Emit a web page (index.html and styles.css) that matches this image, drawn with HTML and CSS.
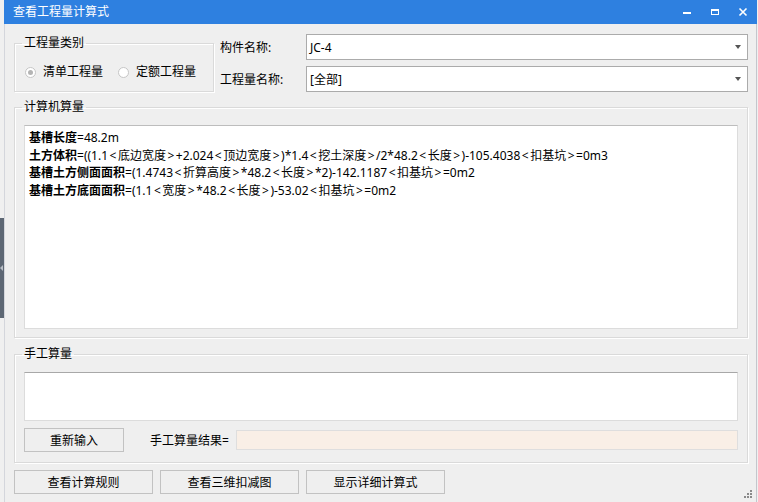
FILE: index.html
```html
<!DOCTYPE html>
<html>
<head>
  <title>查看工程量计算式</title>
  <link rel="stylesheet" href="styles.css">
</head>
<body>
  <div class="side-tab"><span class="side-arrow"></span></div>
  <div class="window">
    <div class="titlebar">
      <span class="title">查看工程量计算式</span>
      <div class="controls">
        <svg width="28" height="24" viewBox="0 0 28 24"><rect x="10" y="12" width="8" height="2" fill="#fff"/></svg>
        <svg width="28" height="24" viewBox="0 0 28 24"><rect x="10.5" y="9.5" width="7" height="5" fill="none" stroke="#fff"/><rect x="10" y="9" width="8" height="2" fill="#fff"/></svg>
        <svg width="28" height="24" viewBox="0 0 28 24"><path d="M10.5 8.5 L17.5 15.5 M17.5 8.5 L10.5 15.5" stroke="#fff" stroke-width="1.6"/></svg>
      </div>
    </div>

    <div class="content">
      <div class="top-row">
        <fieldset class="group group-type">
          <legend>工程量类别</legend>
          <div class="radio-row">
            <label class="radio"><span class="dot checked"></span>清单工程量</label>
            <label class="radio"><span class="dot"></span>定额工程量</label>
          </div>
        </fieldset>
        <div class="fields">
          <div class="field-row">
            <span class="field-label">构件名称:</span>
            <div class="combo"><span>JC-4</span><span class="arrow"></span></div>
          </div>
          <div class="field-row">
            <span class="field-label">工程量名称:</span>
            <div class="combo"><span>[全部]</span><span class="arrow"></span></div>
          </div>
        </div>
      </div>

      <fieldset class="group group-auto">
        <legend>计算机算量</legend>
        <div class="formula-box">
          <div class="line"><b>基槽长度</b>=48.2m</div>
          <div class="line"><b>土方体积</b>=((1.1<span class="ang">&lt;</span>底边宽度<span class="ang">&gt;</span>+2.024<span class="ang">&lt;</span>顶边宽度<span class="ang">&gt;</span>)*1.4<span class="ang">&lt;</span>挖土深度<span class="ang">&gt;</span>/2*48.2<span class="ang">&lt;</span>长度<span class="ang">&gt;</span>)-105.4038<span class="ang">&lt;</span>扣基坑<span class="ang">&gt;</span>=0m3</div>
          <div class="line"><b>基槽土方侧面面积</b>=(1.4743<span class="ang">&lt;</span>折算高度<span class="ang">&gt;</span>*48.2<span class="ang">&lt;</span>长度<span class="ang">&gt;</span>*2)-142.1187<span class="ang">&lt;</span>扣基坑<span class="ang">&gt;</span>=0m2</div>
          <div class="line"><b>基槽土方底面面积</b>=(1.1<span class="ang">&lt;</span>宽度<span class="ang">&gt;</span>*48.2<span class="ang">&lt;</span>长度<span class="ang">&gt;</span>)-53.02<span class="ang">&lt;</span>扣基坑<span class="ang">&gt;</span>=0m2</div>
        </div>
      </fieldset>

      <fieldset class="group group-manual">
        <legend>手工算量</legend>
        <div class="manual-box"></div>
        <div class="manual-row">
          <button class="btn btn-reset">重新输入</button>
          <span class="result-label">手工算量结果=</span>
          <div class="result-field"></div>
        </div>
      </fieldset>

      <div class="bottom-buttons">
        <button class="btn btn-wide">查看计算规则</button>
        <button class="btn btn-wide">查看三维扣减图</button>
        <button class="btn btn-wide">显示详细计算式</button>
      </div>
    </div>
    <div class="grip">
      <svg width="10" height="10" viewBox="0 0 10 10" fill="#8a8a8a">
        <rect x="6" y="0" width="2" height="2"/>
        <rect x="3" y="3" width="2" height="2"/><rect x="6" y="3" width="2" height="2"/>
        <rect x="0" y="6" width="2" height="2"/><rect x="3" y="6" width="2" height="2"/><rect x="6" y="6" width="2" height="2"/>
      </svg>
    </div>
  </div>
</body>
</html>
```

FILE: styles.css
```css
body {
  margin: 0;
  width: 758px;
  height: 502px;
  overflow: hidden;
  background-color: #f0f0f0;
  font-family: "Noto Sans", "Noto Sans CJK SC", sans-serif;
  font-size: 12px;
  color: #000;
  position: relative;
}

.side-tab {
  position: absolute;
  left: 0;
  top: 218px;
  width: 4px;
  height: 100px;
  background-color: #5d6774;
}

.side-arrow {
  position: absolute;
  left: 0;
  top: 47px;
  border-top: 3px solid transparent;
  border-bottom: 3px solid transparent;
  border-right: 3px solid #b8bec6;
}

.window {
  margin-left: 4px;
  width: 753px;
  height: 502px;
  background-color: #efefef;
  border-right: 1px solid #c4c6cc;
  border-left: 1px solid #d4d6dc;
  box-sizing: border-box;
  position: relative;
}

.titlebar {
  height: 24px;
  margin-left: -1px;
  margin-right: -1px;
  background-color: #2e80e0;
  display: flex;
  align-items: center;
  justify-content: space-between;
}

.title {
  color: #fff;
  padding-left: 9px;
  line-height: 24px;
}

.controls {
  display: flex;
}

.controls svg {
  display: block;
}

.content {
  padding-left: 9px;
  padding-right: 8px;
}

.top-row {
  display: flex;
}

.group {
  margin: 0;
  padding: 0 9px;
  border: 1px solid #dadada;
  box-shadow: inset 1px 1px 0 #fff, 1px 1px 0 #fff;
  min-width: 0;
}

.group legend {
  padding: 0 2px;
  margin-left: -2px;
  line-height: 16px;
}

.group-type {
  width: 200px;
  box-sizing: border-box;
  margin-top: 11px;
  padding-bottom: 11px;
}

.radio-row {
  display: flex;
  gap: 15px;
  margin-top: 13px;
  line-height: 16px;
}

.radio {
  display: flex;
  align-items: center;
}

.dot {
  width: 11px;
  height: 11px;
  border: 1px solid #c6c6c6;
  border-radius: 50%;
  box-sizing: border-box;
  background-color: #fff;
  margin-right: 7px;
  display: flex;
  align-items: center;
  justify-content: center;
}

.radio:first-child .dot {
  margin-left: 1px;
}

.dot.checked::after {
  content: "";
  width: 5px;
  height: 5px;
  border-radius: 50%;
  background-color: #b4b4b4;
}

.fields {
  margin-left: 6px;
  margin-top: 10px;
  display: flex;
  flex-direction: column;
  gap: 6px;
}

.field-row {
  display: flex;
  align-items: center;
}

.field-label {
  width: 86px;
}

.combo {
  width: 442px;
  height: 26px;
  box-sizing: border-box;
  border: 1px solid #ababab;
  background-color: #fff;
  display: flex;
  align-items: center;
  justify-content: space-between;
  padding: 0 6px 0 3px;
}

.arrow {
  border-left: 3.5px solid transparent;
  border-right: 3.5px solid transparent;
  border-top: 4px solid #555;
}

.group-auto {
  margin-top: 7px;
  padding-bottom: 8px;
  width: 734px;
  box-sizing: border-box;
}

.formula-box {
  margin-top: 10px;
  height: 204px;
  box-sizing: border-box;
  background-color: #fff;
  border: 1px solid #dcdcdc;
  border-top-color: #bdbdbd;
  padding: 3px 4px;
}

.line {
  line-height: 17.5px;
  white-space: nowrap;
}

.ang {
  padding: 0 1.5px;
}

.group-manual {
  margin-top: 8px;
  padding-bottom: 10px;
  width: 734px;
  box-sizing: border-box;
}

.manual-box {
  margin-top: 10px;
  height: 49px;
  box-sizing: border-box;
  background-color: #fff;
  border: 1px solid #dcdcdc;
  border-top-color: #a8a8a8;
}

.manual-row {
  margin-top: 7px;
  display: flex;
  align-items: center;
}

.btn {
  font-family: inherit;
  font-size: 12px;
  color: #000;
  background-color: #efefef;
  border: 1px solid #c2c2c2;
  height: 24px;
  padding: 0;
  margin: 0;
}

.btn-reset {
  width: 100px;
}

.result-label {
  margin-left: 26px;
  width: 86px;
}

.result-field {
  flex: 1;
  height: 20px;
  box-sizing: border-box;
  background-color: #f9efe6;
  border: 1px solid #dedede;
}

.bottom-buttons {
  margin-top: 7px;
  display: flex;
  gap: 7px;
}

.btn-wide {
  width: 139px;
}

.grip {
  position: absolute;
  right: 2px;
  bottom: 2px;
  line-height: 0;
}
```
